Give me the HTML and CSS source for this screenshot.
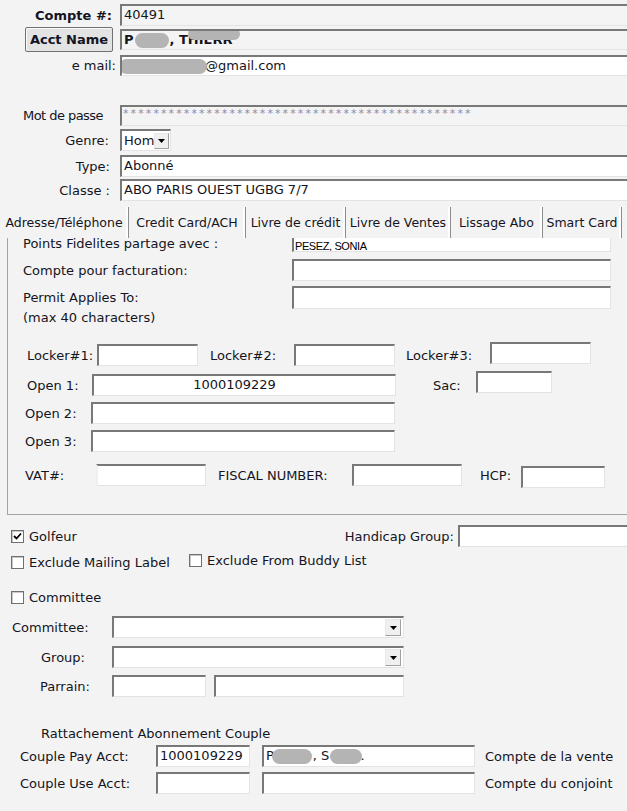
FILE: index.html
```html
<!DOCTYPE html>
<html lang="fr">
<head>
<meta charset="utf-8">
<title>Compte</title>
<link rel="stylesheet" href="styles.css">
</head>
<body>
<div class="page">
  <section class="head">
    <div class="row r1">
      <span class="hl bold">Compte #:</span>
      <div class="fld ro grow">40491</div>
    </div>
    <div class="row r2">
      <span class="hl"><button class="btn">Acct Name</button></span>
      <div class="fld ro grow bold">P<span class="blur bl-a"></span>, THIERR<span class="blur bl-b"></span></div>
    </div>
    <div class="row r3">
      <span class="hl hl-mail">e mail:</span>
      <div class="fld grow"><span class="blur bl-c"></span>@gmail.com</div>
    </div>
    <div class="row r4">
      <span class="hl hl-pwd">Mot de passe</span>
      <div class="fld ro grow pwd">**********************************************</div>
    </div>
    <div class="row r5">
      <span class="hl hl-genre">Genre:</span>
      <div class="sel sel-genre"><span class="sel-val">Hom</span><span class="arrow"><svg width="7" height="4" viewBox="0 0 7 4"><path d="M0 0h7L3.5 4z" fill="#000"/></svg></span></div>
    </div>
    <div class="row r6">
      <span class="hl hl-type">Type:</span>
      <div class="fld grow">Abonné</div>
    </div>
    <div class="row r7">
      <span class="hl hl-type">Classe :</span>
      <div class="fld grow">ABO PARIS OUEST UGBG 7/7</div>
    </div>
  </section>

  <nav class="tabs">
    <span class="tab tab1">Adresse/Téléphone</span>
    <span class="tab tab2">Credit Card/ACH</span>
    <span class="tab tab3">Livre de crédit</span>
    <span class="tab tab4">Livre de Ventes</span>
    <span class="tab tab5">Lissage Abo</span>
    <span class="tab tab6">Smart Card</span>
  </nav>

  <section class="panel">
    <div class="panel-inner">
      <div class="row p-points">
        <span class="pl pl-points">Points Fidelites partage avec :</span>
        <div class="fld fld-wide small-txt">PESEZ, SONIA</div>
      </div>
      <div class="row p-fact">
        <span class="pl">Compte pour facturation:</span>
        <div class="fld fld-wide"></div>
      </div>
      <div class="row p-permit">
        <span class="pl pl-two">Permit Applies To:<br>(max 40 characters)</span>
        <div class="fld fld-wide"></div>
      </div>
      <div class="row p-lock">
        <span class="ll ll1">Locker#1:</span>
        <div class="fld f101"></div>
        <span class="ll ll2">Locker#2:</span>
        <div class="fld f101"></div>
        <span class="ll ll3">Locker#3:</span>
        <div class="fld f101 up2"></div>
      </div>
      <div class="row p-open1">
        <span class="ol ol1">Open 1:</span>
        <div class="fld f304 centered">1000109229</div>
        <span class="ol sac">Sac:</span>
        <div class="fld f76 up3"></div>
      </div>
      <div class="row p-open2">
        <span class="ol">Open 2:</span>
        <div class="fld f304"></div>
      </div>
      <div class="row p-open3">
        <span class="ol">Open 3:</span>
        <div class="fld f304"></div>
      </div>
      <div class="row p-vat">
        <span class="vl vl1">VAT#:</span>
        <div class="fld f110"></div>
        <span class="vl vl2">FISCAL NUMBER:</span>
        <div class="fld f110"></div>
        <span class="vl vl3">HCP:</span>
        <div class="fld f84 down3"></div>
      </div>
    </div>
  </section>

  <section class="lower">
    <div class="row b-golf">
      <span class="cb checked"><svg width="9" height="9" viewBox="0 0 9 9"><path d="M1 4l2.5 2.5L8 1.5" fill="none" stroke="#000" stroke-width="1.8"/></svg></span>
      <span class="cbl">Golfeur</span>
      <span class="spacer"></span>
      <span class="hg-lbl">Handicap Group:</span>
      <div class="fld hg-fld"></div>
    </div>
    <div class="row b-excl">
      <span class="cb"></span>
      <span class="cbl excl1">Exclude Mailing Label</span>
      <span class="cb up2"></span>
      <span class="cbl up2">Exclude From Buddy List</span>
    </div>
    <div class="row b-comm">
      <span class="cb"></span>
      <span class="cbl">Committee</span>
    </div>
    <div class="row b-csel">
      <span class="bl bl-comm">Committee:</span>
      <div class="sel sel-wide"><span class="sel-val"></span><span class="arrow"><svg width="7" height="4" viewBox="0 0 7 4"><path d="M0 0h7L3.5 4z" fill="#000"/></svg></span></div>
    </div>
    <div class="row b-gsel">
      <span class="bl bl-group">Group:</span>
      <div class="sel sel-wide"><span class="sel-val"></span><span class="arrow"><svg width="7" height="4" viewBox="0 0 7 4"><path d="M0 0h7L3.5 4z" fill="#000"/></svg></span></div>
    </div>
    <div class="row b-parr">
      <span class="bl bl-parr">Parrain:</span>
      <div class="fld f94"></div>
      <div class="fld f190"></div>
    </div>
    <div class="ratt">Rattachement Abonnement Couple</div>
    <div class="row b-cpay">
      <span class="cl">Couple Pay Acct:</span>
      <div class="fld f94">1000109229</div>
      <div class="fld f213">P<span class="blur bl-d"></span>, S<span class="blur bl-e"></span>.</div>
      <span class="cr">Compte de la vente</span>
    </div>
    <div class="row b-cuse">
      <span class="cl">Couple Use Acct:</span>
      <div class="fld f94"></div>
      <div class="fld f213"></div>
      <span class="cr">Compte du conjoint</span>
    </div>
  </section>
</div>
</body>
</html>
```
FILE: styles.css
```css
* { box-sizing: border-box; }
html, body { margin: 0; padding: 0; }
body {
  width: 627px;
  height: 811px;
  overflow: hidden;
  background: #f3f3f3;
  font-family: "DejaVu Sans", Verdana, sans-serif;
  font-size: 13px;
  color: #141422;
}
.page { width: 627px; overflow: hidden; }
.bold { font-weight: bold; }
.row { display: flex; align-items: center; }

/* fields */
.fld {
  height: 22px;
  background: #fff;
  border-style: solid;
  border-width: 2px 1px 1px 2px;
  border-color: #787878 #e3e3e3 #e3e3e3 #787878;
  padding: 0 2px;
  line-height: 18px;
  white-space: nowrap;
  overflow: hidden;
  flex: none;
}
.fld.ro { background: #f4f4f4; }
.grow { flex: 1; margin-right: -6px; }
.blur {
  display: inline-block;
  height: 15px;
  background: #b4b4b4;
  border-radius: 8px;
  vertical-align: top;
  margin-top: 2px;
  filter: blur(0.6px);
}
.bl-a { width: 34px; margin-left: 1px; margin-right: 1px; }
.bl-b { width: 52px; margin-left: -44px; height: 12px; position: relative; top: -5px; }
.bl-c { width: 88px; margin-left: -5px; margin-right: -2px; }
.bl-d { width: 40px; margin-left: -2px; margin-right: 1px; }
.bl-e { width: 32px; margin-left: 1px; margin-right: -2px; }

/* header rows */
.head { padding-top: 4px; }
.hl { width: 120px; flex: none; text-align: right; padding-right: 8px; }
.hl-mail { padding-right: 4px; }
.hl-pwd { padding-right: 17px; letter-spacing: -0.55px; }
.hl-genre { padding-right: 11px; }
.hl-type { padding-right: 10px; }
.r1 { height: 22px; }
.r2 { height: 21px; margin-top: 3px; }
.r2 .fld { height: 21px; }
.r3 { height: 21px; margin-top: 5px; }
.r3 .fld { height: 21px; }
.r4 { height: 21px; margin-top: 29px; }
.r4 .fld { height: 21px; }
.r5 { height: 22px; margin-top: 3px; }
.r6 { height: 22px; margin-top: 4px; }
.r7 { height: 22px; margin-top: 2px; }
.pwd { color: #8a8aa6; font-size: 11px; letter-spacing: 2.1px; padding-left: 1px; line-height: 14px; }

.btn {
  margin-left: 25px;
  width: 88px;
  height: 25px;
  margin-top: -2px;
  margin-bottom: -2px;
  font: bold 13px "DejaVu Sans", Verdana, sans-serif;
  color: #141422;
  background: #e3e3e3;
  border: 1px solid #707070;
  border-radius: 2px;
  box-shadow: inset 1px 1px 0 #fbfbfb;
  padding: 0;
}

/* select */
.sel {
  display: flex;
  align-items: center;
  height: 22px;
  background: #fff;
  border-style: solid;
  border-width: 2px 1px 1px 2px;
  border-color: #787878 #e3e3e3 #e3e3e3 #787878;
  padding-right: 2px;
  flex: none;
}
.sel-val { flex: 1; padding-left: 2px; }
.sel-genre { width: 51px; }
.sel-wide { width: 292px; }
.arrow {
  width: 16px;
  height: 17px;
  background: #f0f0f0;
  border: 1px solid;
  border-color: #e8e8e8 #a0a0a0 #a0a0a0 #e8e8e8;
  display: flex;
  align-items: center;
  justify-content: center;
  flex: none;
}
.sel-genre .arrow { width: 15px; height: 16px; }

/* tabs */
.tabs {
  display: flex;
  height: 31px;
  margin-top: 6px;
  align-items: stretch;
}
.tab {
  display: flex;
  align-items: center;
  justify-content: center;
  border-right: 1px solid #8c8c8c;
  box-shadow: inset -2px 0 0 #fdfdfd;
  font-size: 12.5px;
}
.tab1 { width: 129px; }
.tab2 { width: 117px; }
.tab3 { width: 100px; }
.tab4 { width: 105px; }
.tab5 { width: 92px; }
.tab6 { width: 79px; }

/* panel */
.panel {
  margin-left: 7px;
  height: 277px;
  border-left: 1px solid #a4a4a4;
  border-bottom: 1px solid #a4a4a4;
  overflow: hidden;
}
.panel-inner { margin-top: -7px; }
.pl { width: 284px; flex: none; padding-left: 15px; }
.pl-points { padding-top: 3px; }
.fld-wide { width: 319px; }
.small-txt { font-family: "Liberation Sans", Arial, sans-serif; font-size: 11px; line-height: 26px; letter-spacing: -0.4px; color: #000; padding-left: 1px; }
.p-points .fld { height: 21px; }
.p-fact { margin-top: 7px; }
.p-permit { margin-top: 5px; align-items: flex-start; }
.pl-two { line-height: 20px; padding-top: 2px; }
.p-permit .fld { height: 23px; }

.p-lock { margin-top: 16px; padding-left: 19px; }
.ll { flex: none; }
.ll1 { width: 70px; }
.ll2 { width: 84px; margin-left: 12px; }
.ll3 { width: 84px; margin-left: 11px; }
.f101 { width: 101px; }
.up2 { position: relative; top: -2px; }
.up3 { position: relative; top: -3px; }
.down3 { position: relative; top: 2px; }

.p-open1 { margin-top: 8px; padding-left: 19px; }
.ol { width: 66px; flex: none; }
.ol1 { width: 65px; }
.p-open2, .p-open3 { margin-top: 6px; padding-left: 17px; }
.f304 { width: 304px; }
.centered { text-align: center; padding-right: 22px; }
.sac { width: 43px; margin-left: 37px; }
.f76 { width: 76px; }

.p-vat { margin-top: 12px; padding-left: 17px; }
.vl { flex: none; }
.vl1 { width: 71px; }
.vl2 { width: 134px; margin-left: 12px; }
.vl3 { width: 41px; margin-left: 18px; }
.f110 { width: 110px; }
.f84 { width: 84px; }
.p-vat .f110:first-of-type { border-left-color: #f0f0f0; }

/* lower */
.lower { padding-top: 10px; }
.cb {
  width: 13px;
  height: 13px;
  flex: none;
  background: #fff;
  border: 1px solid #707070;
  box-shadow: inset 1px 1px 0 #c8c8c8;
  display: flex;
  align-items: center;
  justify-content: center;
}
.cbl { margin-left: 5px; flex: none; }
.b-golf { height: 22px; padding-left: 11px; }
.spacer { flex: 1; }
.hg-lbl { margin-right: 4px; }
.hg-fld { width: 172px; margin-right: -3px; }
.b-excl { height: 18px; margin-top: 6px; padding-left: 11px; }
.excl1 { width: 160px; }
.b-comm { height: 18px; margin-top: 17px; padding-left: 11px; }

.b-csel { margin-top: 10px; }
.b-gsel { margin-top: 8px; }
.b-parr { margin-top: 7px; }
.bl { flex: none; width: 112px; }
.bl-comm { padding-left: 12px; }
.bl-group { padding-left: 41px; }
.bl-parr { padding-left: 40px; }
.f94 { width: 94px; }
.f190 { width: 190px; margin-left: 8px; }

.ratt { margin-top: 29px; padding-left: 41px; height: 16px; line-height: 16px; }
.b-cpay { margin-top: 3px; }
.b-cuse { margin-top: 5px; }
.cl { width: 156px; flex: none; padding-left: 20px; }
.f213 { width: 213px; margin-left: 12px; }
.cr { margin-left: 10px; flex: none; }
```
